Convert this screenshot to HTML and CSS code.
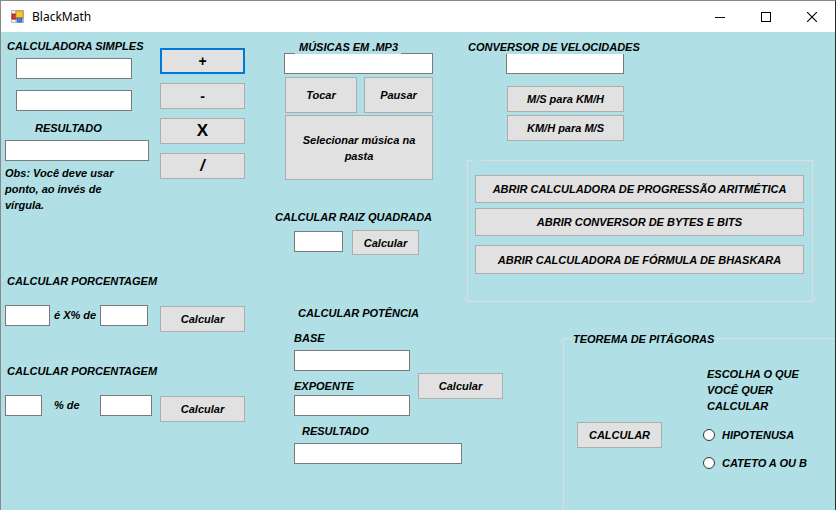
FILE: index.html
```html
<!DOCTYPE html>
<html lang="pt-BR">
<head>
<meta charset="utf-8">
<title>BlackMath</title>
<link rel="stylesheet" href="styles.css">
</head>
<body>
<div class="window">
  <div class="titlebar">
    <svg class="app-icon" width="13" height="13" viewBox="0 0 13 13">
      <rect x="0.5" y="0.5" width="12" height="12" fill="#f4f4f4" stroke="#b8b8b8"/>
      <line x1="0.5" y1="4.5" x2="12.5" y2="4.5" stroke="#c8c8c8"/>
      <line x1="4.5" y1="0.5" x2="4.5" y2="12.5" stroke="#c8c8c8"/>
      <line x1="0.5" y1="9.5" x2="12.5" y2="9.5" stroke="#c8c8c8"/>
      <rect x="1" y="4" width="4" height="5" fill="#d83a2a" stroke="#8a1c10" stroke-width="0.8"/>
      <rect x="5" y="1" width="7" height="7" fill="#f7c632" stroke="#c98a10" stroke-width="0.8"/>
      <rect x="6" y="8" width="5" height="4" fill="#4c86d8" stroke="#2a5aa8" stroke-width="0.8"/>
    </svg>
    <span class="app-title">BlackMath</span>
    <span class="spacer"></span>
    <span class="cap-btn">
      <svg width="10" height="10" viewBox="0 0 10 10"><line x1="0" y1="5.5" x2="10" y2="5.5" stroke="#000" stroke-width="1"/></svg>
    </span>
    <span class="cap-btn">
      <svg width="10" height="10" viewBox="0 0 10 10"><rect x="0.5" y="0.5" width="9" height="9" fill="none" stroke="#000" stroke-width="1"/></svg>
    </span>
    <span class="cap-btn">
      <svg width="10" height="10" viewBox="0 0 10 10"><path d="M0 0 L10 10 M10 0 L0 10" stroke="#000" stroke-width="1.1"/></svg>
    </span>
  </div>

  <div class="client">
    <!-- LEFT COLUMN -->
    <div class="col col-left">
      <div class="calc">
        <div class="calc-inputs">
          <div class="lbl l-calc">CALCULADORA SIMPLES</div>
          <div class="tb tb-calc1"></div>
          <div class="tb tb-calc2"></div>
          <div class="lbl l-res">RESULTADO</div>
          <div class="tb tb-res"></div>
          <div class="obs">Obs: Você deve usar<br>ponto, ao invés de<br>vírgula.</div>
        </div>
        <div class="calc-ops">
          <div class="btn op op-small focus">+</div>
          <div class="btn op op-small">-</div>
          <div class="btn op op-big">X</div>
          <div class="btn op op-slash">/</div>
        </div>
      </div>

      <div class="lbl l-perc1">CALCULAR PORCENTAGEM</div>
      <div class="perc-row row1">
        <div class="tb p1a"></div>
        <div class="plbl p1l">é X% de</div>
        <div class="tb p1b"></div>
        <div class="btn pbtn1">Calcular</div>
      </div>

      <div class="lbl l-perc2">CALCULAR PORCENTAGEM</div>
      <div class="perc-row row2">
        <div class="tb p2a"></div>
        <div class="plbl p2l">% de</div>
        <div class="tb p2b"></div>
        <div class="btn pbtn2">Calcular</div>
      </div>
    </div>

    <!-- MIDDLE COLUMN -->
    <div class="col col-mid">
      <div class="lbl cover l-mus">MÚSICAS EM .MP3</div>
      <div class="tb tb-mus"></div>
      <div class="mus-row">
        <div class="btn b-tocar">Tocar</div>
        <div class="btn b-pausar">Pausar</div>
      </div>
      <div class="btn b-sel">Selecionar música na<br>pasta</div>

      <div class="lbl l-raiz">CALCULAR RAIZ QUADRADA</div>
      <div class="raiz-row">
        <div class="tb tb-raiz"></div>
        <div class="btn b-raiz">Calcular</div>
      </div>

      <div class="lbl l-pot">CALCULAR POTÊNCIA</div>
      <div class="lbl l-base">BASE</div>
      <div class="tb tb-base"></div>
      <div class="exp-row">
        <div class="exp-group">
          <div class="lbl l-exp">EXPOENTE</div>
          <div class="tb tb-exp"></div>
        </div>
        <div class="btn b-pot">Calcular</div>
      </div>
      <div class="lbl l-potres">RESULTADO</div>
      <div class="tb tb-potres"></div>
    </div>

    <!-- RIGHT COLUMN -->
    <div class="col col-right">
      <div class="lbl cover l-conv">CONVERSOR DE VELOCIDADES</div>
      <div class="tb tb-conv"></div>
      <div class="btn b-conv1">M/S para KM/H</div>
      <div class="btn b-conv2">KM/H para M/S</div>

      <div class="group g-open">
        <div class="g-gap"></div>
        <div class="btn b-open1">ABRIR CALCULADORA DE PROGRESSÃO ARITMÉTICA</div>
        <div class="btn b-open2">ABRIR CONVERSOR DE BYTES E BITS</div>
        <div class="btn b-open3">ABRIR CALCULADORA DE FÓRMULA DE BHASKARA</div>
      </div>

      <div class="group g-pit">
        <div class="lbl cover g-title">TEOREMA DE PITÁGORAS</div>
        <div class="pit-body">
          <div class="btn b-pit">CALCULAR</div>
          <div class="pit-right">
            <div class="pit-text">ESCOLHA O QUE<br>VOCÊ QUER<br>CALCULAR</div>
            <div class="radio-row r1"><span class="radio"></span><span class="rlbl">HIPOTENUSA</span></div>
            <div class="radio-row r2"><span class="radio"></span><span class="rlbl">CATETO A OU B</span></div>
          </div>
        </div>
      </div>
    </div>
  </div>
</div>
</body>
</html>
```

FILE: styles.css
```css
* { box-sizing: border-box; }
html, body { margin: 0; padding: 0; }
body {
  width: 836px;
  height: 510px;
  overflow: hidden;
  background: #b0e0e6;
}
.window {
  width: 836px;
  height: 510px;
  border-top: 1px solid #8a8a8a;
  border-left: 1px solid #8a8a8a;
  border-right: 1px solid #2b2b26;
  overflow: hidden;
  display: flex;
  flex-direction: column;
  font-family: "Liberation Sans", Arial, sans-serif;
  font-size: 11px;
  font-weight: bold;
  font-style: italic;
  color: #000;
}

/* title bar */
.titlebar {
  height: 31px;
  flex: none;
  background: #fff;
  display: flex;
  align-items: center;
}
.app-icon { margin-left: 10px; margin-top: 0; flex: none; }
.app-title {
  margin-left: 8px;
  font-family: "Noto Sans", "Open Sans", sans-serif;
  font-size: 12px;
  font-weight: normal;
  font-style: normal;
  color: #000;
}
.spacer { flex: 1; }
.cap-btn {
  width: 46px;
  height: 31px;
  display: flex;
  align-items: center;
  justify-content: center;
}

/* client */
.client {
  flex: 1;
  display: flex;
  background: #b0e0e6;
}
.col { display: flex; flex-direction: column; align-items: flex-start; flex: none; }
.col-left { width: 269px; }
.col-mid { width: 195px; }
.col-right { width: 370px; }

.lbl { line-height: 13px; white-space: nowrap; }
.cover {
  line-height: 14px;
  background: #b0e0e6;
  position: relative;
  z-index: 1;
}
.tb {
  height: 21px;
  background: #fff;
  border: 1px solid #7a7a7a;
  flex: none;
}
.btn {
  background: #e1e1e1;
  border: 1px solid #adadad;
  display: flex;
  align-items: center;
  justify-content: center;
  text-align: center;
  line-height: 16px;
  white-space: nowrap;
  flex: none;
}

/* simple calculator */
.calc { display: flex; }
.calc-inputs { width: 159px; display: flex; flex-direction: column; align-items: flex-start; }
.l-calc { margin-top: 8px; margin-left: 6px; }
.tb-calc1 { margin-top: 5px; margin-left: 15px; width: 116px; }
.tb-calc2 { margin-top: 11px; margin-left: 15px; width: 116px; }
.l-res { margin-top: 11px; margin-left: 34px; }
.tb-res { margin-top: 5px; margin-left: 4px; width: 144px; }
.obs { margin-top: 4px; margin-left: 4px; line-height: 16px; white-space: nowrap; }

.calc-ops { display: flex; flex-direction: column; gap: 9px; padding-top: 16px; }
.op { width: 85px; height: 26px; font-style: normal; }
.op-small { font-size: 14px; }
.op-big { font-size: 17px; }
.op-slash { font-size: 16px; font-style: italic; }
.focus { border: 2px solid #0078d7; }

/* percentage */
.l-perc1 { margin-top: 62px; margin-left: 6px; }
.l-perc2 { margin-top: 33px; margin-left: 6px; }
.perc-row { display: flex; align-items: flex-start; margin-top: 17px; }
.plbl { line-height: 21px; height: 21px; white-space: nowrap; }
.p1a { margin-left: 4px; width: 45px; }
.p1l { width: 50px; padding-left: 4px; }
.p1b { width: 48px; }
.pbtn1 { margin-left: 12px; margin-top: 1px; width: 85px; height: 26px; }
.p2a { margin-left: 4px; width: 37px; }
.p2l { width: 58px; padding-left: 12px; }
.p2b { width: 52px; }
.pbtn2 { margin-left: 8px; margin-top: 1px; width: 85px; height: 26px; }

/* music */
.l-mus { margin-top: 8px; margin-left: 25px; padding: 0 3px 0 4px; }
.tb-mus { margin-top: -1px; margin-left: 14px; width: 149px; }
.mus-row { display: flex; margin-top: 3px; }
.b-tocar { margin-left: 15px; width: 72px; height: 36px; }
.b-pausar { margin-left: 7px; width: 69px; height: 36px; }
.b-sel { margin-top: 2px; margin-left: 15px; width: 148px; height: 65px; white-space: normal; }

/* square root */
.l-raiz { margin-top: 31px; margin-left: 5px; }
.raiz-row { display: flex; align-items: flex-start; margin-top: 6px; }
.tb-raiz { margin-left: 24px; margin-top: 1px; width: 49px; }
.b-raiz { margin-left: 9px; width: 67px; height: 25px; }

/* power */
.l-pot { margin-top: 52px; margin-left: 28px; }
.l-base { margin-top: 12px; margin-left: 24px; }
.tb-base { margin-top: 5px; margin-left: 24px; width: 116px; }
.exp-row { display: flex; align-items: flex-start; margin-top: 2px; }
.exp-group { margin-left: 24px; width: 116px; display: flex; flex-direction: column; }
.l-exp { margin-top: 7px; }
.tb-exp { margin-top: 2px; width: 116px; }
.b-pot { margin-left: 8px; width: 85px; height: 26px; }
.l-potres { margin-top: 9px; margin-left: 32px; }
.tb-potres { margin-top: 5px; margin-left: 24px; width: 168px; }

/* speed converter */
.l-conv { margin-top: 8px; padding: 0 3px; }
.tb-conv { margin-top: -1px; margin-left: 41px; width: 118px; }
.b-conv1 { margin-top: 12px; margin-left: 42px; width: 117px; height: 26px; }
.b-conv2 { margin-top: 3px; margin-left: 42px; width: 117px; height: 26px; }

/* group boxes */
.group { border: 1px solid #dedede; }
.g-open {
  margin-top: 19px;
  margin-left: 2px;
  width: 346px;
  height: 142px;
  padding-left: 7px;
  display: flex;
  flex-direction: column;
  align-items: flex-start;
}
.g-gap { margin-top: -1px; margin-left: -2px; width: 8px; height: 2px; background: #b0e0e6; }
.b-open1 { margin-top: 13px; width: 329px; height: 28px; }
.b-open2 { margin-top: 5px; width: 329px; height: 28px; }
.b-open3 { margin-top: 9px; width: 329px; height: 29px; }

.g-pit {
  margin-top: 36px;
  margin-left: 98px;
  width: 300px;
  height: 220px;
  display: flex;
  flex-direction: column;
  align-items: flex-start;
}
.g-title { margin-top: -6px; margin-left: 7px; padding: 0 2px; line-height: 13px; }
.pit-body { display: flex; align-items: flex-start; }
.b-pit { margin-top: 76px; margin-left: 13px; width: 85px; height: 26px; }
.pit-right { margin-left: 41px; display: flex; flex-direction: column; }
.pit-text { margin-top: 20px; padding-left: 4px; line-height: 16px; white-space: nowrap; }
.radio-row { display: flex; align-items: center; height: 16px; }
.r1 { margin-top: 13px; }
.r2 { margin-top: 12px; }
.radio {
  width: 12px;
  height: 12px;
  border: 1px solid #333;
  border-radius: 50%;
  background: #fff;
  flex: none;
}
.rlbl { margin-left: 7px; white-space: nowrap; }
```
